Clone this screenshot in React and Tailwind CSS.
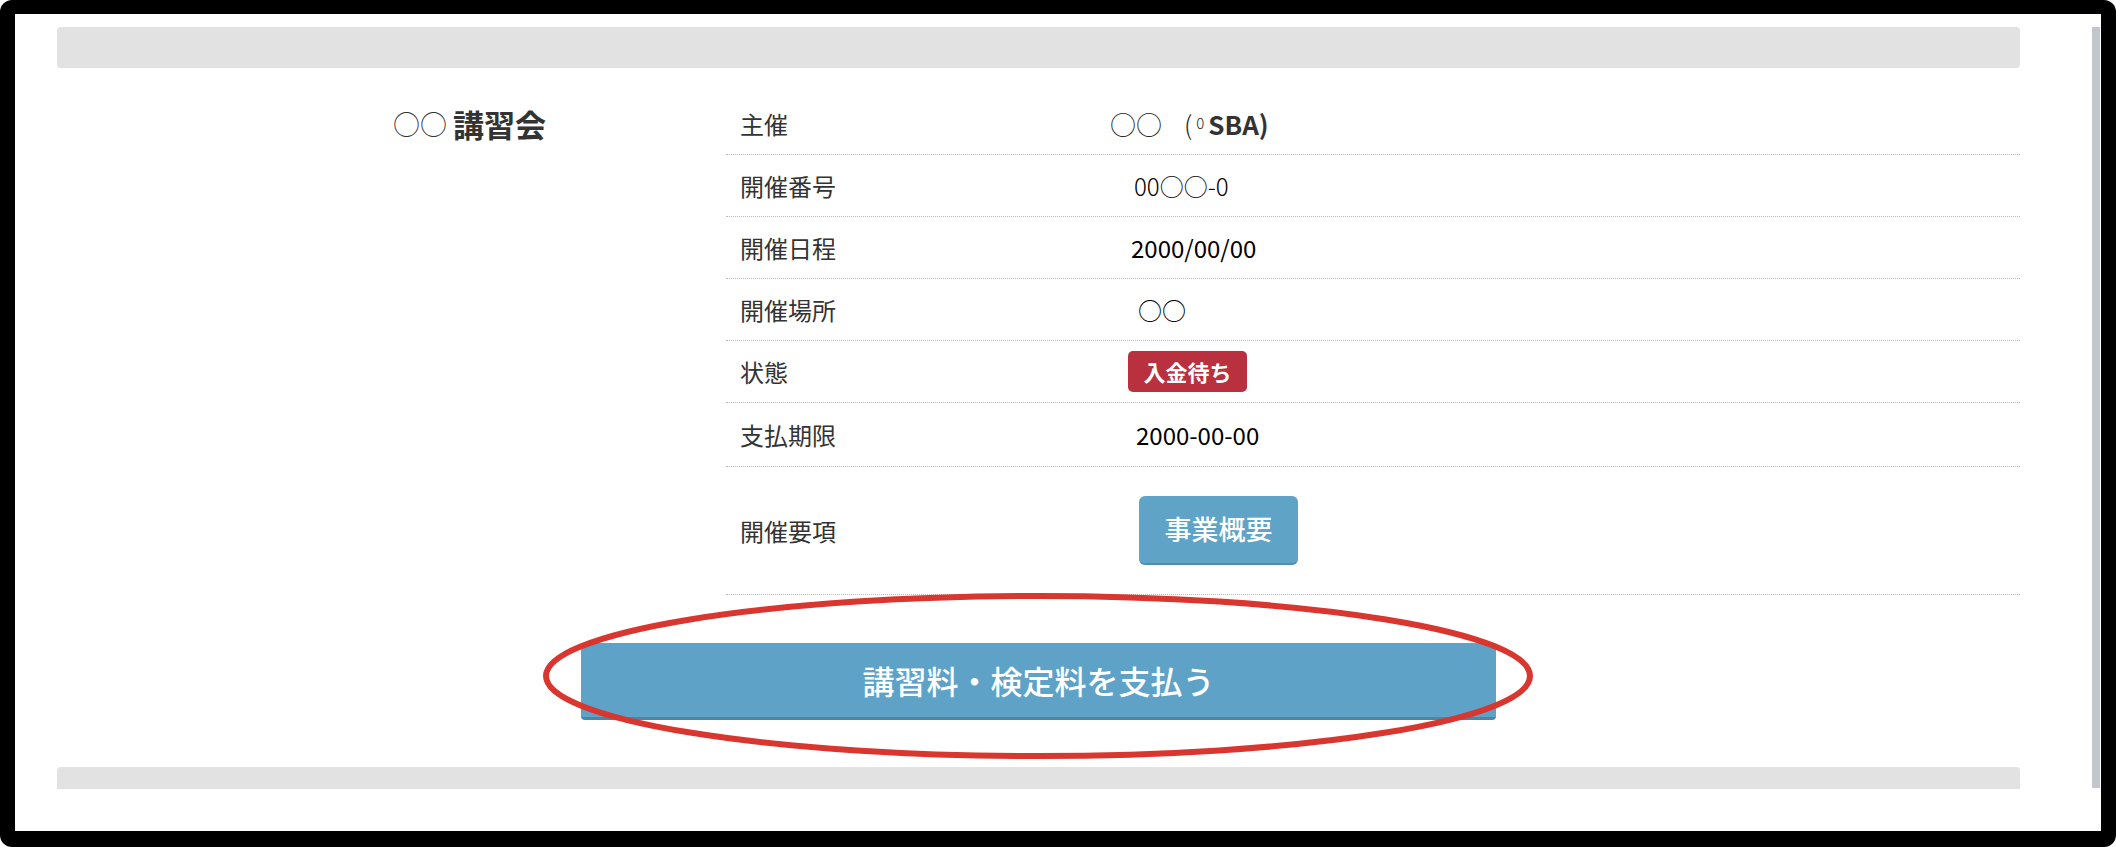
import React from "react";

const rows = [
  { label: "主催", kind: "host", h: "h-[62px]" },
  { label: "開催番号", kind: "text", value: "00○○-0", pad: "ml-[24px]", thin: true, h: "h-[62px]" },
  { label: "開催日程", kind: "text", value: "2000/00/00", pad: "ml-[21px]", h: "h-[62px]" },
  { label: "開催場所", kind: "text", value: "○○", pad: "ml-[28px]", h: "h-[62px]" },
  { label: "状態", kind: "badge", value: "入金待ち", h: "h-[62px]" },
  { label: "支払期限", kind: "text", value: "2000-00-00", pad: "ml-[26px]", h: "h-[64px]" },
];

const Value = ({ row }) => {
  if (row.kind === "host") {
    return (
      <div className="flex items-center text-[26px] text-[#222]">
        <span className="font-light">○○</span>
        <span className="ml-[22px] font-light">(</span>
        <span className="ml-[4px] text-[15px] font-light">0</span>
        <span className="ml-[4px] font-bold text-[#333]">SBA)</span>
      </div>
    );
  }
  if (row.kind === "badge") {
    return (
      <span className="ml-[18px] flex h-[41px] w-[119px] items-center justify-center rounded-[5px] bg-[#b9303f] text-[22px] font-bold text-white">
        {row.value}
      </span>
    );
  }
  return (
    <span
      className={`${row.pad} text-[24px] text-black ${row.thin ? "font-light" : "font-normal"}`}
    >
      {row.value}
    </span>
  );
};

export default function App() {
  return (
    <div className="h-[847px] w-[2116px] bg-white font-['Noto_Sans_CJK_JP','Noto_Sans',sans-serif]">
      {/* black frame */}
      <div className="h-full w-full rounded-[12px] bg-black pt-[14px] pr-[15px] pb-[16px] pl-[15px]">
        <div className="relative flex h-full w-full bg-white">
          <div className="flex w-[2005px] flex-col pt-[13px] pl-[42px]">
            <div className="h-[41px] w-full rounded-[4px] bg-[#e2e2e2]" />

            <div className="mt-[25px] flex">
              {/* course title */}
              <div className="w-[669px]">
                <div className="flex h-[62px] items-center pl-[336px] text-[#333]">
                  <span className="text-[27px] font-light">○○</span>
                  <span className="ml-[6px] text-[31px] font-bold">講習会</span>
                </div>
              </div>

              {/* detail table */}
              <div className="flex-1">
                {rows.map((row) => (
                  <div
                    key={row.label}
                    className={`flex ${row.h} items-center border-b border-dotted border-[#bbbbbb]`}
                  >
                    <div className="w-[384px] pl-[14px] text-[24px] text-[#333]">{row.label}</div>
                    <div className="flex items-center">
                      <Value row={row} />
                    </div>
                  </div>
                ))}
                <div className="flex h-[128px] items-center border-b border-dotted border-[#bbbbbb]">
                  <div className="w-[384px] pl-[14px] text-[24px] text-[#333]">開催要項</div>
                  <button className="ml-[29px] flex h-[69px] w-[159px] items-center justify-center rounded-[6px] border-b-2 border-[#4f8fb2] bg-[#5fa3c7] text-[27px] font-medium text-white">
                    事業概要
                  </button>
                </div>
              </div>
            </div>

            <div className="mt-[48px] flex justify-center">
              <button className="flex h-[77px] w-[915px] items-center justify-center rounded-[4px] border-b-[3px] border-[#4a86a6] bg-[#5ea3c7] text-[32px] font-medium text-white">
                講習料・検定料を支払う
              </button>
            </div>

            <div className="mt-[47px] h-[22px] w-full rounded-t-[4px] bg-[#e2e2e2]" />
          </div>

          {/* scrollbar */}
          <div className="ml-[72px] mt-[13px] h-[761px] w-[8px] bg-[#c2c6cd]" />

          {/* hand-drawn highlight around the pay button */}
          <svg
            className="pointer-events-none absolute top-0 left-0"
            width="2086"
            height="817"
            viewBox="0 0 2086 817"
          >
            <ellipse
              cx="1023"
              cy="662"
              rx="492"
              ry="80"
              fill="none"
              stroke="#d93630"
              strokeWidth="6"
            />
          </svg>
        </div>
      </div>
    </div>
  );
}
